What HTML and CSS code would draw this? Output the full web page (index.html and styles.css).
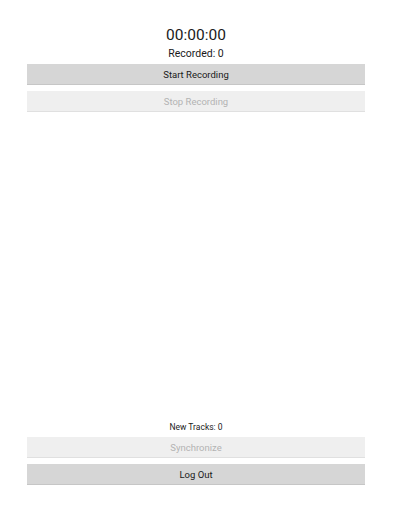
FILE: index.html
```html
<!DOCTYPE html>
<html>
<head>
<meta charset="utf-8">
<link rel="stylesheet" href="styles.css">
</head>
<body>
<div class="app">
  <div class="top">
    <div class="timer">00:00:00</div>
    <div class="recorded">Recorded: 0</div>
    <div class="btn">Start Recording</div>
    <div class="btn disabled">Stop Recording</div>
  </div>
  <div class="bottom">
    <div class="tracks">New Tracks: 0</div>
    <div class="btn disabled">Synchronize</div>
    <div class="btn">Log Out</div>
  </div>
</div>
</body>
</html>
```
FILE: styles.css
```css
html, body {
  margin: 0;
  padding: 0;
  background: #ffffff;
}
.app {
  height: 100vh;
  box-sizing: border-box;
  display: flex;
  flex-direction: column;
  justify-content: space-between;
  padding: 26px 28px 27px 27px;
  font-family: Roboto, "Noto Sans", sans-serif;
  color: #1a1a1a;
}
.top, .bottom {
  display: flex;
  flex-direction: column;
}
.timer {
  text-align: center;
  font-size: 15.5px;
  line-height: 18px;
}
.recorded {
  text-align: center;
  font-size: 10.5px;
  line-height: 14px;
  margin-top: 3px;
  margin-bottom: 3px;
}
.tracks {
  text-align: center;
  font-size: 8.5px;
  line-height: 12px;
  margin-bottom: 4px;
}
.btn {
  height: 20px;
  line-height: 22px;
  overflow: hidden;
  background: #d6d6d6;
  border-bottom: 1px solid #c6c6c6;
  text-align: center;
  font-size: 9.5px;
  color: #1a1a1a;
}
.btn + .btn {
  margin-top: 6px;
}
.btn.disabled {
  background: #efefef;
  border-bottom-color: #e0e0e0;
  color: #b3b3b3;
}
```
